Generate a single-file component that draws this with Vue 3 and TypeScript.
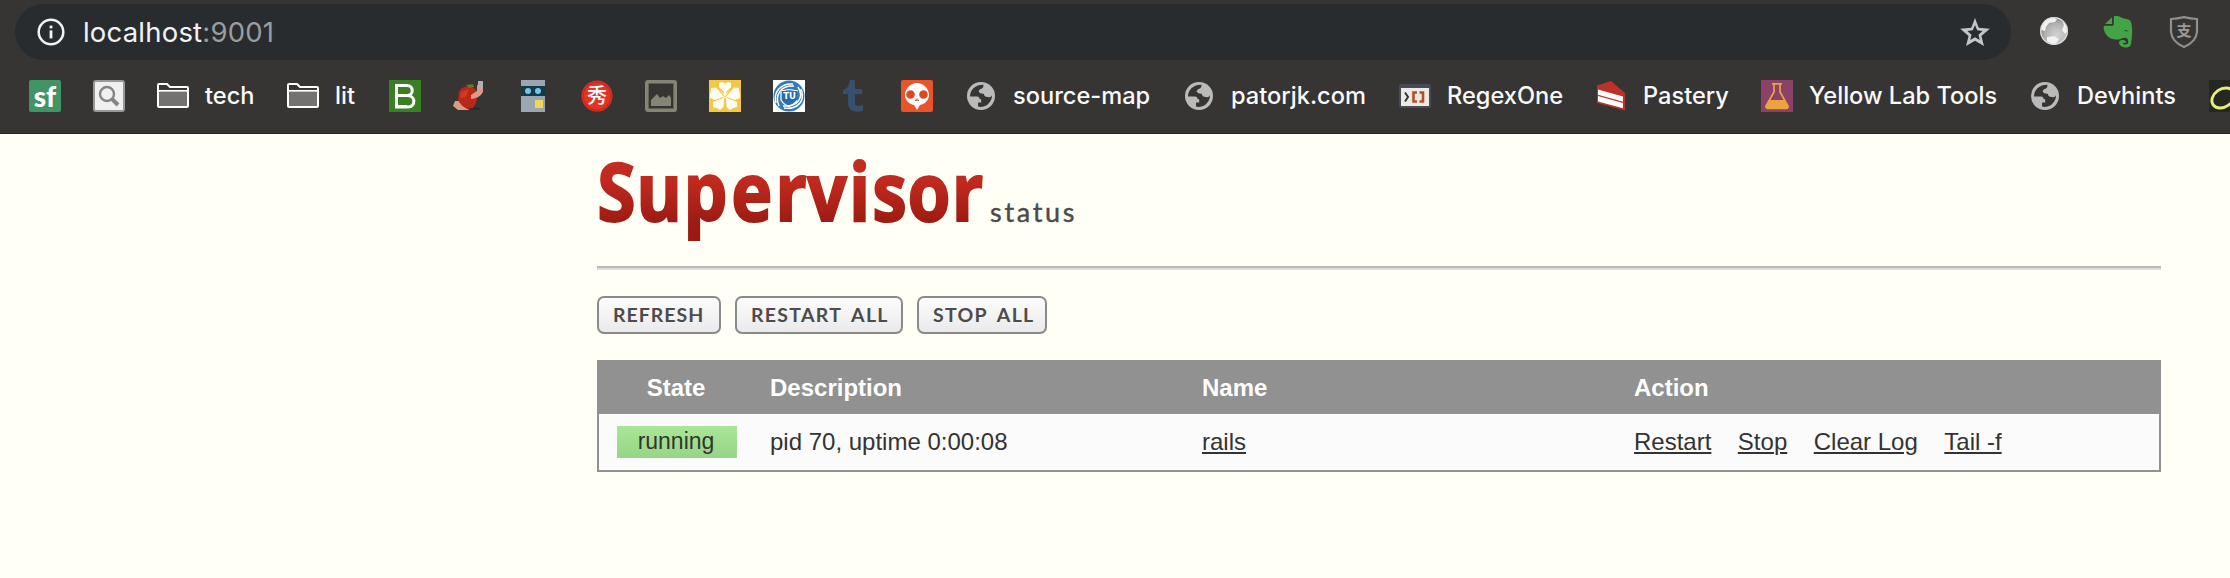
<script setup lang="ts">
interface Bookmark {
  icon: string
  label?: string
  width?: number
}

interface Process {
  state: string
  description: string
  name: string
  actions: string[]
}

const bookmarks: Bookmark[] = [
  { icon: 'sf' },
  { icon: 'search' },
  { icon: 'folder', label: 'tech', width: 50 },
  { icon: 'folder', label: 'lit', width: 22 },
  { icon: 'b' },
  { icon: 'tomato' },
  { icon: 'robot' },
  { icon: 'xiu' },
  { icon: 'image' },
  { icon: 'clover' },
  { icon: 'tu' },
  { icon: 'tumblr' },
  { icon: 'skull' },
  { icon: 'globe', label: 'source-map', width: 138 },
  { icon: 'globe', label: 'patorjk.com', width: 136 },
  { icon: 'regex', label: 'RegexOne', width: 116 },
  { icon: 'cake', label: 'Pastery', width: 86 },
  { icon: 'flask', label: 'Yellow Lab Tools', width: 188 },
  { icon: 'globe', label: 'Devhints', width: 100 },
  { icon: 'ring' },
]

const buttons = [
  { label: 'REFRESH', kind: 'refresh' },
  { label: 'RESTART ALL', kind: 'restart' },
  { label: 'STOP ALL', kind: 'stop' },
]

const processes: Process[] = [
  {
    state: 'running',
    description: 'pid 70, uptime 0:00:08',
    name: 'rails',
    actions: ['Restart', 'Stop', 'Clear Log', 'Tail -f'],
  },
]
</script>

<template>
  <div class="window">
    <header class="chrome">
      <div class="toolbar">
        <div class="omnibox">
          <svg class="info" viewBox="0 0 28 28">
            <circle cx="14" cy="14" r="12.3" fill="none" stroke="#f1f3f4" stroke-width="2.5" />
            <rect x="12.6" y="7.6" width="2.8" height="2.8" fill="#f1f3f4" />
            <rect x="12.6" y="12.4" width="2.8" height="8" fill="#f1f3f4" />
          </svg>
          <div class="url"><span>localhost</span><span class="port">:9001</span></div>
          <svg class="star" viewBox="0 0 30 28">
            <path fill-rule="evenodd" fill="#c3c6c9" d="M15 0 18.7 9.8 29.8 10.7 21.4 18 24 28 15 22.7 6 28 8.6 18 .2 10.7 11.3 9.8ZM15 7 12.8 12.3 7.4 12.9 11.5 16.7 10.3 22 15 19.3 19.7 22 18.5 16.7 22.6 12.9 17.2 12.3Z" />
          </svg>
        </div>
        <div class="extensions">
          <svg viewBox="0 0 32 32">
            <defs>
              <radialGradient id="ball" cx=".6" cy=".65" r=".65">
                <stop offset="0" stop-color="#d4d4d4" />
                <stop offset=".65" stop-color="#b0b0b0" />
                <stop offset="1" stop-color="#858585" />
              </radialGradient>
            </defs>
            <circle cx="16" cy="15" r="14" fill="url(#ball)" />
            <path fill="#f2f2f2" d="M3 14C3 7 8 2 14 1.5L19 3 17 6 11 7 8 11 7 15ZM9 21 16 20 21 23 18 28 14 28.5 9 25ZM24 5 28 9 29.5 15 27 18 24 14 26 9Z" />
            <circle cx="16" cy="15" r="13.3" fill="none" stroke="#ddd" stroke-width="1.3" />
          </svg>
          <svg viewBox="0 0 32 32">
            <path fill="#43a446" d="M11 0C14-.3 17 .2 19 2 23 3 27 3 28 6 30 13 29 22 28 28 27 32 23 32 20 31 14.5 29.5 15 23.5 20 24 22 24 23 25 23 27 20 26 19 28 21 28.5 24 29 26 28 25 24 24 20 19 22 16 23.5 10 24 3 22 1 14 0 11 1 9.5 3 9.5H10Z" />
            <path d="M2 8 9 1.3V8Z" fill="#43a446" />
            <path d="M2.5 9H10V1" fill="none" stroke="#373533" stroke-width="1.2" />
            <path d="M21 15.2Q23 12.8 25.4 15.7Q23 14.8 21 15.2Z" fill="#263b27" />
          </svg>
          <svg viewBox="0 0 32 32">
            <path fill="none" stroke="#8f8f8f" stroke-width="2.2" d="M16 1.2Q23 2.6 29 3V16Q28 26 16 31 4 26 3 16V3Q9 2.6 16 1.2Z" />
            <text x="16" y="20.3" class="cjk shield-text">支</text>
          </svg>
        </div>
      </div>

      <nav class="bookmarks">
        <a v-for="(item, index) in bookmarks" :key="index" class="bookmark">
          <svg class="favicon" viewBox="0 0 32 32">
            <template v-if="item.icon === 'sf'">
              <rect width="32" height="32" rx="2" fill="#439465" />
              <text x="16" y="27" class="sf-text">sf</text>
            </template>
            <template v-else-if="item.icon === 'search'">
              <rect x="1" y="1" width="30" height="30" rx="2" fill="#f0f0f0" stroke="#999" stroke-width="2" />
              <circle cx="14" cy="14" r="7" fill="none" stroke="#858585" stroke-width="2.4" />
              <path d="M19 19 25 25" stroke="#858585" stroke-width="4" />
            </template>
            <template v-else-if="item.icon === 'folder'">
              <path d="M1 26V5Q1 4 2 4H10L13 7H30Q31 7 31 8V26Q31 27 30 27H2Q1 27 1 26Z" fill="#373533" stroke="#fff" stroke-width="2" />
              <rect x="2" y="11" width="28" height="15" fill="#747270" />
              <path d="M2 10.8H30" stroke="#fff" stroke-width="1.7" />
            </template>
            <template v-else-if="item.icon === 'b'">
              <rect width="32" height="32" fill="#388022" />
              <path fill="none" stroke="#fff" stroke-width="3" d="M7.5 5V27H19C27 27 27 15.5 18 15.5 25 15.5 25 5.5 18 5.5H6M6 26.5H18M8 15.5H18" />
            </template>
            <template v-else-if="item.icon === 'tomato'">
              <path fill="#2b2827" d="M12 29Q22 24 29 30Z" />
              <path fill="#dc9b88" d="M2 21H8L14 28 16 30H5L0 26Z" />
              <path fill="#b92718" d="M6 12Q8 7 14 6.5 22 6 24 12 25 22 20 28L14 29Q7 25 5 20Z" />
              <path fill="#d43821" d="M8 12 16 9 13 17 7 18Z" />
              <path fill="#dc9b88" d="M24 5 30 6 30 12Q27 18 18 19L18 15 24 11Z" />
              <path fill="#b4afac" d="M25 1H30V7L25 9Z" />
              <path fill="#667a22" d="M13 5 20 4 21 7 16 8Z" />
            </template>
            <template v-else-if="item.icon === 'robot'">
              <rect x="4" width="24" height="32" fill="#9ba7b0" />
              <rect x="4" y="6" width="24" height="10" fill="#153b4a" />
              <circle cx="11" cy="11" r="3" fill="#73c6e7" />
              <circle cx="21" cy="11" r="3" fill="#73c6e7" />
              <rect x="18" y="20" width="8" height="8" fill="#f1d554" />
            </template>
            <template v-else-if="item.icon === 'xiu'">
              <circle cx="16" cy="16" r="15.5" fill="#e33424" />
              <circle cx="16" cy="16" r="14" fill="none" stroke="#c92a20" stroke-width="1.5" />
              <text x="16" y="23" class="cjk xiu-text">秀</text>
            </template>
            <template v-else-if="item.icon === 'image'">
              <rect x="1.8" y="1.8" width="28.4" height="28.4" rx="1" fill="#373533" stroke="#858573" stroke-width="3.6" />
              <path fill="#858573" d="M6 26V20L10 16 12 14 15 18 18 16 21 18 24 15 26 18V26Z" />
            </template>
            <template v-else-if="item.icon === 'clover'">
              <rect width="32" height="32" fill="#f5c743" />
              <g fill="#fffdf5">
                <path d="M16 17 10 8V3L13 2 16 3.5 19 2 22 3V8Z" />
                <path d="M16 18 6 20 1 18V14L2 12V8L7 7.5Z" />
                <path d="M16 18 26 20 31 18V14L30 12V8L25 7.5Z" />
                <path d="M15.3 17 14.5 27 11 30 8 28 4 27V22L9 19Z" />
                <path d="M16.7 17 17.5 27 21 30 24 28 28 27V22L23 19Z" />
              </g>
              <path d="M15 13 10 8M17 13 22 8M14 17.5 5 21M18 17.5 27 21M16 19V30" stroke="#f5c743" stroke-width="1.2" />
            </template>
            <template v-else-if="item.icon === 'tu'">
              <rect width="32" height="32" fill="#fff" />
              <circle cx="16" cy="16" r="15.5" fill="#347bb8" />
              <path fill="none" stroke="#fff" stroke-width="1.5" d="M3 23C0 12 8 3 20 4M6 26C1 14 9 5 21 6M28 9C33 22 23 30 11 28M25 7C32 18 24 27 10 26" />
              <path fill="none" stroke="#fff" stroke-width="1.2" d="M8 11 16 9.5 25 11M8 12V20Q11 25 16 26.5 21 25 24 20" />
              <path fill="#286da8" d="M9 11 16 12 24 11 24 20 16 25 9 20Z" />
              <text x="16.5" y="19" class="tu-text">TU</text>
            </template>
            <template v-else-if="item.icon === 'tumblr'">
              <path fill="#36506d" d="M13 0H18V9H25V14H18V23Q18 26 21 26L26 25V31Q12 34 11 24V14H6V10Q12 8 13 0Z" />
            </template>
            <template v-else-if="item.icon === 'skull'">
              <rect width="32" height="32" rx="2" fill="#eb5329" />
              <path fill="#fff" d="M16 3C22 3 28 8 28 15 28 20 24 24 19 25L16 30 13 25C8 24 4 20 4 15 4 8 10 3 16 3Z" />
              <circle cx="9.5" cy="14.5" r="4.3" fill="#d94a24" />
              <circle cx="22.5" cy="14.5" r="4.3" fill="#d94a24" />
              <path fill="#6f3020" d="M14 21 15.5 18V21ZM18 21 16.5 18V21Z" />
            </template>
            <template v-else-if="item.icon === 'globe'">
              <circle cx="16" cy="16" r="14" fill="#bababa" />
              <path fill="#373533" d="M18.5 4.8C11 4.5 5 9.5 5 16.5H12Q14.6 16.5 14.6 19.2H16.2V22.5H13V26.6Q21 28.2 25.5 21 27.2 18.4 27 15.3Q25.8 18 22.8 17 19.5 17.2 18.7 13.7 15.5 14.2 13.7 11.7 13.8 9 17 8.4Q18.8 7.4 18.5 4.8Z" />
            </template>
            <template v-else-if="item.icon === 'regex'">
              <rect y="4" width="32" height="24" rx="2" fill="#454c59" />
              <rect x="2" y="8" width="28" height="18" fill="#eee9e5" />
              <path d="M6 12.5 9 17 6 21.5" fill="none" stroke="#34353a" stroke-width="2" />
              <path d="M18 12.5H14.5V21.5H18M20.5 12.5H24V21.5H20.5" fill="none" stroke="#b84e27" stroke-width="2.6" />
            </template>
            <template v-else-if="item.icon === 'cake'">
              <path fill="#bd3128" d="M2 5.5 16 1 30 13V30.5L2 23Z" />
              <path fill="#fff" d="M3 9.5 28 16.5V21.8L3 14.8ZM3 16 28 23V28.3L3 21.5Z" />
            </template>
            <template v-else-if="item.icon === 'flask'">
              <rect width="32" height="32" fill="#8b4268" />
              <path d="M11 3.8H21M13 4V12L5 26Q4.5 28.3 7 28.5H25Q27.5 28.3 27 26L19 12V4" fill="none" stroke="#eda33d" stroke-width="1.7" />
              <path fill="#eda33d" d="M8 20H24L27 26Q27 28.5 25 28.5H7Q4.5 28 5 26Z" />
            </template>
            <template v-else-if="item.icon === 'ring'">
              <rect width="32" height="32" fill="#252722" />
              <ellipse cx="14" cy="18" rx="12" ry="9" transform="rotate(-35 14 18)" fill="none" stroke="#e9ec78" stroke-width="3" />
            </template>
          </svg>
          <span v-if="item.label" class="label" :style="{ width: item.width + 'px' }">{{ item.label }}</span>
        </a>
      </nav>
    </header>

    <main class="page">
      <svg class="logo" viewBox="0 0 500 110">
        <defs>
          <linearGradient id="red" gradientUnits="userSpaceOnUse" x1="0" y1="24" x2="0" y2="106">
            <stop offset="0" stop-color="#c52d23" />
            <stop offset=".3" stop-color="#bf291f" />
            <stop offset=".8" stop-color="#9c1b12" />
            <stop offset="1" stop-color="#981a11" />
          </linearGradient>
        </defs>
        <text class="brand" transform="scale(.86 1)" y="86.5" x="0.4 45.6 100.6 156 207.4 244.6 293 320.2 361 412.6" fill="url(#red)" stroke="url(#red)">Supervisor</text>
        <text class="brand-sub" x="393" y="87.5" textLength="84.5">status</text>
      </svg>

      <div class="rule"></div>

      <div class="buttons">
        <a v-for="button in buttons" :key="button.kind" class="button" :class="button.kind">{{ button.label }}</a>
      </div>

      <section class="table">
        <div class="row head">
          <div class="state">State</div>
          <div>Description</div>
          <div>Name</div>
          <div>Action</div>
        </div>
        <div v-for="process in processes" :key="process.name" class="row body">
          <div class="state"><span class="badge">{{ process.state }}</span></div>
          <div>{{ process.description }}</div>
          <div><a>{{ process.name }}</a></div>
          <div class="actions"><a v-for="action in process.actions" :key="action">{{ action }}</a></div>
        </div>
      </section>
    </main>
  </div>
</template>

<style>
body {
  background: #fffff5;
  overflow: hidden;
}
</style>

<style scoped>
.window {
  width: 2230px;
  height: 578px;
  overflow: hidden;
  background: #fffff5;
  font-family: "Liberation Sans", Arial, sans-serif;
}
.chrome {
  box-sizing: border-box;
  height: 134px;
  padding-top: 4px;
  background: #373533;
  border-bottom: 1px solid #242321;
  overflow: hidden;
}
.toolbar {
  display: flex;
  height: 56px;
  padding-left: 15px;
}
.omnibox {
  box-sizing: border-box;
  display: flex;
  align-items: center;
  width: 1996px;
  height: 56px;
  padding: 0 21px 0 22px;
  border-radius: 28px;
  background: #292c2f;
}
.info {
  width: 28px;
  height: 28px;
}
.url {
  flex: 1;
  margin-left: 18px;
  font: 400 27.5px/56px Inter, Roboto, sans-serif;
  letter-spacing: 0.2px;
  color: #f1f3f4;
}
.port {
  color: #9a9d9f;
}
.star {
  width: 30px;
  height: 28px;
}
.extensions {
  display: flex;
  gap: 33px;
  padding: 12px 0 0 27px;
}
.extensions svg {
  width: 32px;
  height: 32px;
}
.bookmarks {
  display: flex;
  gap: 32px;
  padding: 20px 0 0 29px;
}
.bookmark {
  display: flex;
  flex: none;
  gap: 16px;
  height: 32px;
}
.favicon {
  flex: none;
  width: 32px;
  height: 32px;
}
.label {
  font: 450 23.6px/31px Inter, Roboto, sans-serif;
  color: #fafafa;
  white-space: nowrap;
}
.cjk {
  font-family: "Noto Sans CJK SC", sans-serif;
  text-anchor: middle;
}
.shield-text {
  font-size: 15px;
  font-weight: 700;
  fill: #9a9a9a;
}
.xiu-text {
  font-size: 20px;
  font-weight: 500;
  fill: #fff;
}
.sf-text {
  font: 900 28px Lato, sans-serif;
  text-anchor: middle;
  fill: #fff;
}
.tu-text {
  font: 700 8.5px "DejaVu Sans", sans-serif;
  text-anchor: middle;
  fill: #fff;
}
.page {
  width: 1564px;
  margin-left: 597px;
}
.logo {
  display: block;
  width: 500px;
  height: 110px;
  overflow: visible;
}
.brand {
  font: 700 81px "Open Sans", "Noto Sans", sans-serif;
  stroke-width: 2px;
}
.brand-sub {
  font: 400 27px Lato, sans-serif;
  fill: #4a4a4a;
  stroke: #4a4a4a;
  stroke-width: 0.4px;
}
.rule {
  height: 2px;
  margin-top: 22px;
  background: #bababa;
  border-bottom: 2px solid #dcdcda;
}
.buttons {
  display: flex;
  gap: 14px;
  margin-top: 26px;
}
.button {
  box-sizing: border-box;
  height: 38px;
  padding-left: 14px;
  border: 2px solid #8a8a8a;
  border-radius: 7px;
  background: linear-gradient(#fcfcfc, #eaeaec);
  font: 700 19.5px/33px Lato, sans-serif;
  color: #4c4c4c;
  white-space: nowrap;
}
.refresh {
  width: 124px;
  letter-spacing: 1px;
}
.restart {
  width: 168px;
  letter-spacing: 1.3px;
  word-spacing: 4px;
}
.stop {
  width: 130px;
  letter-spacing: 1.3px;
  word-spacing: 4px;
}
.table {
  box-sizing: border-box;
  height: 112px;
  margin-top: 26px;
  border: 2px solid #919191;
  font-size: 24px;
  color: #333;
}
.row {
  display: grid;
  grid-template-columns: 155px 432px 432px 525px;
  padding-left: 16px;
}
.head {
  height: 52px;
  background: #919191;
  color: #fff;
  font-weight: 700;
  line-height: 51px;
}
.body {
  box-sizing: border-box;
  height: 56px;
  background: linear-gradient(#fff 0 1px, #fbfbfb 1px);
  line-height: 55px;
}
.state {
  width: 122px;
  text-align: center;
}
.badge {
  display: block;
  box-sizing: border-box;
  width: 120px;
  height: 32px;
  margin: 12px 0 0 2px;
  padding-right: 2px;
  background: linear-gradient(#a7e796, #97d586);
  font-size: 23px;
  line-height: 30px;
}
.actions {
  display: flex;
  gap: 26.5px;
}
a {
  text-decoration: none;
}
.body a {
  text-decoration: underline;
  text-decoration-thickness: 2px;
  text-underline-offset: 2px;
}
</style>
